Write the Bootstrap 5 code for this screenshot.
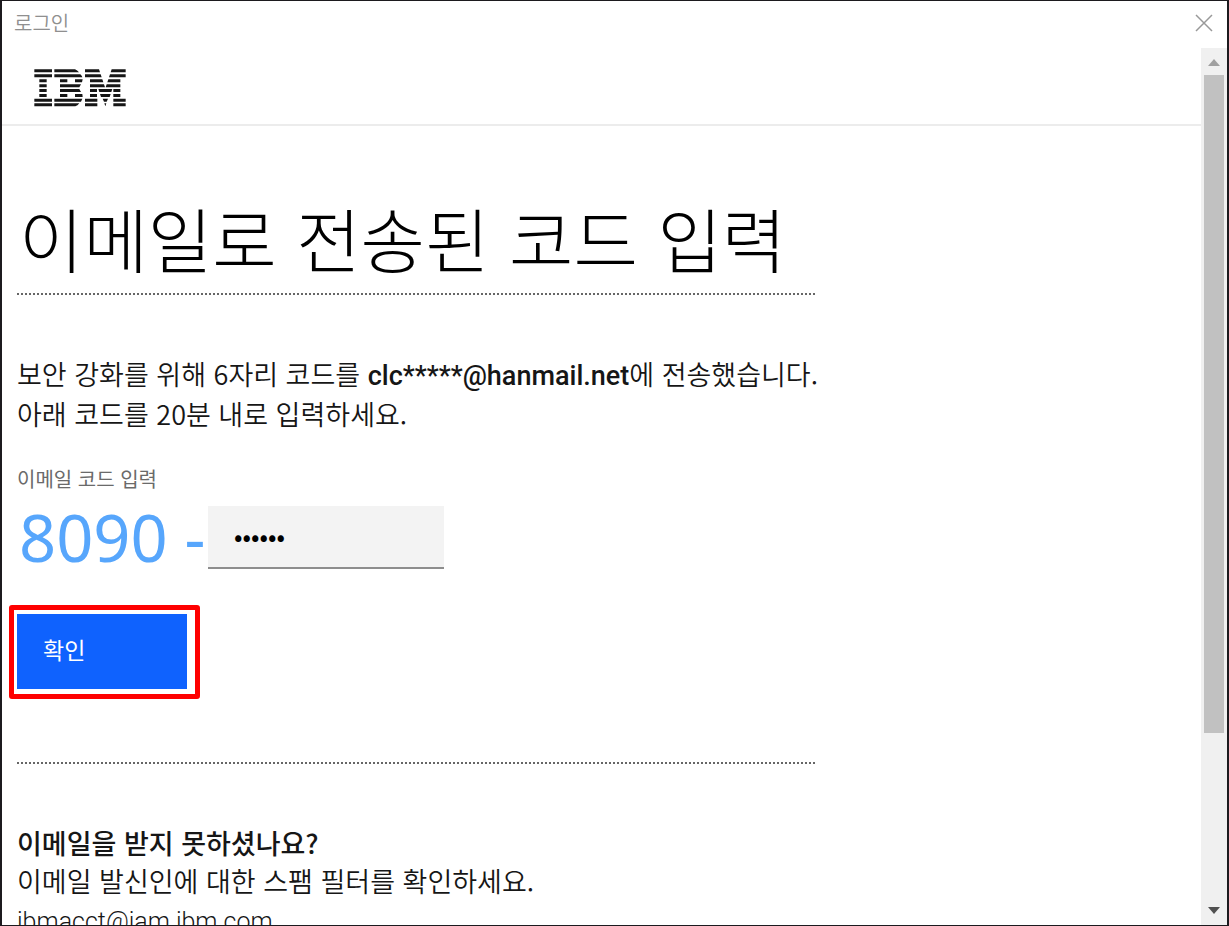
<!DOCTYPE html>
<html lang="ko">
<head>
<meta charset="utf-8">
<meta name="viewport" content="width=device-width, initial-scale=1">
<title>로그인</title>
<link href="https://cdn.jsdelivr.net/npm/bootstrap@5.3.0/dist/css/bootstrap.min.css" rel="stylesheet">
<style>
  body { font-family: "Noto Sans CJK KR", sans-serif; font-weight: 350; color: #161616; }
  .window-frame { border: solid #1c1a1e; border-width: 1px 2px; background: #fff; }
  .title-bar { height: 47px; padding: 0 11px 4px 12px; }
  .title-text { font-size: 20px; line-height: 24px; color: #8f8f8f; }
  .close-btn { width: 24px; height: 24px; }
  .brand-bar { height: 78px; padding: 4px 0 0 32px; border-bottom: 2px solid #ececec; }
  .page-body { padding: 70px 16px 0 15px; }
  .form-column { width: 798px; max-width: 100%; }
  .page-title { font-size: 70px; line-height: 84px; font-weight: 300; color: #000; padding: 0 0 13px 2px; }
  .dotted-rule { border-bottom: 2px dotted #666; }
  .copy { font-size: 27px; line-height: 38px; }
  .copy strong { font-weight: 500; }
  .copy-intro { margin: 60px 0 34px; }
  .copy-help { margin: 60px 0 0; }
  .latin { font-family: Roboto, "Noto Sans CJK KR", sans-serif; }
  .mail-link { font-size: 25px; }
  .code-label { font-size: 20px; line-height: 24px; font-weight: 400; color: #6a6a6a; margin-bottom: 14px; }
  .code-prefix { font-family: "Noto Sans", sans-serif; font-size: 65px; line-height: 64px; font-weight: 400; color: #57a6fc; width: 191px; padding-left: 2px; }
  .code-input { width: 236px; height: 63px; background: #f3f3f3; border-bottom: 2px solid #8d8d8d; padding: 0 26px 4px; font-size: 25px; color: #000; }
  .highlight-box { border: 5px solid #fe0000; border-radius: 3px; padding: 4px 8px 5px 3px; margin: 36px 0 63px -8px; }
  .confirm-btn { width: 170px; height: 75px; background: #0f62fe; color: #fff; font-size: 23px; padding: 0 26px 4px; }
  .scroll-track { width: 26px; background: #f0f0f0; padding: 11px 0; }
  .scroll-thumb { width: 20px; background: #c1c1c1; flex: 0 0 77%; margin-top: 9px; }
</style>
</head>
<body>
<div class="window-frame vh-100 d-flex flex-column overflow-hidden">
  <div class="title-bar d-flex align-items-center justify-content-between flex-shrink-0">
    <span class="title-text">로그인</span>
    <button type="button" class="close-btn btn p-0 border-0 d-flex align-items-center justify-content-center" aria-label="닫기">
      <svg width="18" height="18" viewBox="0 0 18 18" stroke="#999" stroke-width="1.5" aria-hidden="true"><path d="M1 1 17 17M17 1 1 17"/></svg>
    </button>
  </div>
  <div class="d-flex flex-grow-1 overflow-hidden">
    <main class="flex-grow-1 overflow-hidden">
      <header class="brand-bar d-flex align-items-center">
        <a href="#" class="d-flex" aria-label="IBM">
          <svg width="92" height="38" viewBox="102 206 276 114" fill="#161616" aria-hidden="true">
            <path d="M103 207h53v9h-53zM103 222h53v9h-53zM118 237h22v9h-22zM118 252h22v9h-22zM118 266h22v9h-22zM118 281h22v9h-22zM103 295h53v9h-53zM103 309h53v9h-53z"/>
            <path d="M163 207h62q7 3 12 9h-74zM163 222h78q5 4 6 9h-84zM180 237h22v9h-22zM225 237h23l-2 9h-21zM180 252h63l-5 9h-58zM180 266h58l5 9h-63zM180 281h22v9h-22zM225 281h22l1 9h-23zM163 295h84l-4 9h-80zM163 309h75q-5 7-12 9h-63z"/>
            <path d="M255 207h42l3 9h-45zM255 222h47l3 9h-50zM270 237h37l3 9h-40zM270 252h42l3 9h-45zM270 266h21v9h-21zM295 266h42l-3 9h-36zM270 281h21v9h-21zM300 281h32l-3 9h-26zM255 295h37v9h-37zM308 295h16l-4 9h-8zM255 309h37v9h-37zM313 309h6l-3 9z"/>
            <path d="M335 207h42v9h-45zM330 222h47v9h-50zM325 237h36v9h-39zM320 252h41v9h-44zM340 266h21v9h-21zM340 281h21v9h-21zM340 295h37v9h-37zM340 309h37v9h-37z"/>
          </svg>
        </a>
      </header>
      <div class="page-body">
        <form class="form-column">
          <h1 class="page-title dotted-rule m-0">이메일로 전송된 코드 입력</h1>
          <p class="copy copy-intro text-nowrap">보안 강화를 위해 6자리 코드를 <strong class="latin">clc*****@hanmail.net</strong>에 전송했습니다.<br>아래 코드를 20분 내로 입력하세요.</p>
          <label class="code-label d-block" for="email-code">이메일 코드 입력</label>
          <div class="d-flex align-items-end">
            <span class="code-prefix text-nowrap flex-shrink-0">8090 -</span>
            <input id="email-code" type="password" class="code-input form-control border-top-0 border-start-0 border-end-0 rounded-0" value="123456">
          </div>
          <div class="d-flex">
            <div class="highlight-box">
              <button type="submit" class="confirm-btn btn d-block border-0 rounded-0 text-start">확인</button>
            </div>
          </div>
          <div class="dotted-rule"></div>
          <p class="copy copy-help"><strong>이메일을 받지 못하셨나요?</strong><br>이메일 발신인에 대한 스팸 필터를 확인하세요.<br><span class="latin mail-link">ibmacct@iam.ibm.com</span></p>
        </form>
      </div>
    </main>
    <div class="scroll-track d-flex flex-column align-items-center flex-shrink-0" aria-hidden="true">
      <svg class="flex-shrink-0" width="12" height="7" viewBox="0 0 12 7" fill="#a0a0a0"><path d="M6 0 12 7H0z"/></svg>
      <div class="scroll-thumb"></div>
      <svg class="flex-shrink-0 mt-auto" width="12" height="7" viewBox="0 0 12 7" fill="#505050"><path d="M0 0H12L6 7z"/></svg>
    </div>
  </div>
</div>
<script src="https://cdn.jsdelivr.net/npm/bootstrap@5.3.0/dist/js/bootstrap.bundle.min.js"></script>
</body>
</html>
